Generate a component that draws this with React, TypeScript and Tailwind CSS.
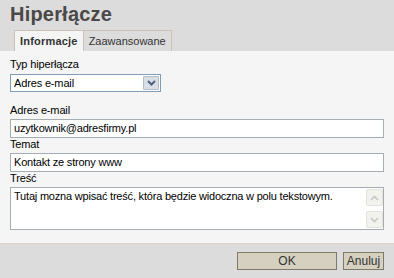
import * as React from "react";

const font = { fontFamily: '"Liberation Sans", Arial, sans-serif' };

function Field({ label, children }: { label: string; children: React.ReactNode }) {
  return (
    <div className="flex flex-col">
      <label className="h-[14px] text-[11px] leading-[13px] tracking-[-0.15px] text-black">{label}</label>
      {children}
    </div>
  );
}

function TextBox({ value }: { value: string }) {
  return (
    <div className="mt-[1px] flex h-[19px] w-[374px] items-center border border-[#a5acb2] bg-white px-[3px] text-[11px] tracking-[-0.2px] text-black">
      {value}
    </div>
  );
}

function ScrollArrow({ up }: { up?: boolean }) {
  return (
    <div className="flex h-[17px] w-[17px] items-center justify-center rounded-[2px] border border-[#e3e3dc] bg-[#f3f3ee]">
      <svg width="9" height="6" viewBox="0 0 9 6">
        <path
          d={up ? "M1 5 L4.5 1.5 L8 5" : "M1 1 L4.5 4.5 L8 1"}
          fill="none"
          stroke="#c5c7c9"
          strokeWidth="1.6"
        />
      </svg>
    </div>
  );
}

export default function App() {
  return (
    <div className="flex h-[278px] w-[394px] flex-col bg-[#dcdcdc]" style={font}>
      {/* header */}
      <div className="pl-[10px] pt-[2px]">
        <h1 className="text-[20px] font-bold leading-[24px] tracking-[0.2px] text-[#4b4848]">
          Hiperłącze
        </h1>
        <div className="mt-[4px] flex pl-[4px]">
          <div className="h-[21px] border-x border-t border-[#c9c3b5] bg-[#f5f5f5] px-[5px] pt-[4px] text-[11px] font-bold leading-[13px] tracking-[0.2px] text-[#333]">
            Informacje
          </div>
          <div className="h-[21px] border-r border-t border-[#c9c3b5] bg-[#dcdcdc] px-[5px] pt-[4px] text-[11px] leading-[13px] text-[#333]">
            Zaawansowane
          </div>
        </div>
      </div>

      {/* body */}
      <div className="flex h-[192px] flex-col bg-[#f5f5f5] pl-[10px] pt-[7px]">
        <Field label="Typ hiperłącza">
          <div className="mt-[2px] flex h-[18px] w-[151px] items-center justify-between border border-[#7f9db9] bg-white pl-[3px] pr-[1px] text-[11px] tracking-[-0.15px] text-black">
            <span>Adres e-mail</span>
            <div className="flex h-[14px] w-[16px] items-center justify-center rounded-[1px] border border-[#b3bccb] bg-[#d9dee7]">
              <svg width="9" height="6" viewBox="0 0 9 6">
                <path d="M1 1 L4.5 4.5 L8 1" fill="none" stroke="#4d6185" strokeWidth="2" />
              </svg>
            </div>
          </div>
        </Field>

        <div className="mt-[12px] flex flex-col">
          <Field label="Adres e-mail">
            <TextBox value="uzytkownik@adresfirmy.pl" />
          </Field>
          <Field label="Temat">
            <TextBox value="Kontakt ze strony www" />
          </Field>
          <Field label="Treść">
            <div className="mt-[1px] flex h-[43px] w-[374px] border border-[#a5acb2] bg-white">
              <div className="flex-1 pl-[3px] pt-[2px] text-[11px] leading-[13px] tracking-[-0.2px] text-black">
                Tutaj mozna wpisać treść, która będzie widoczna w polu tekstowym.
              </div>
              <div className="flex w-[17px] flex-col justify-between py-[1px]">
                <ScrollArrow up />
                <ScrollArrow />
              </div>
            </div>
          </Field>
        </div>
      </div>

      {/* footer */}
      <div className="flex flex-1 items-start justify-end gap-[6px] border-t border-[#ded2cb] pr-[10px] pt-[8px]">
        <button className="h-[18px] w-[100px] border border-[#7e7968] bg-[#d5d0c0] text-[12px] leading-[16px] text-[#333]">
          OK
        </button>
        <button className="h-[18px] w-[41px] border border-[#7e7968] bg-[#d5d0c0] text-[12px] leading-[16px] text-[#333]">
          Anuluj
        </button>
      </div>
    </div>
  );
}
